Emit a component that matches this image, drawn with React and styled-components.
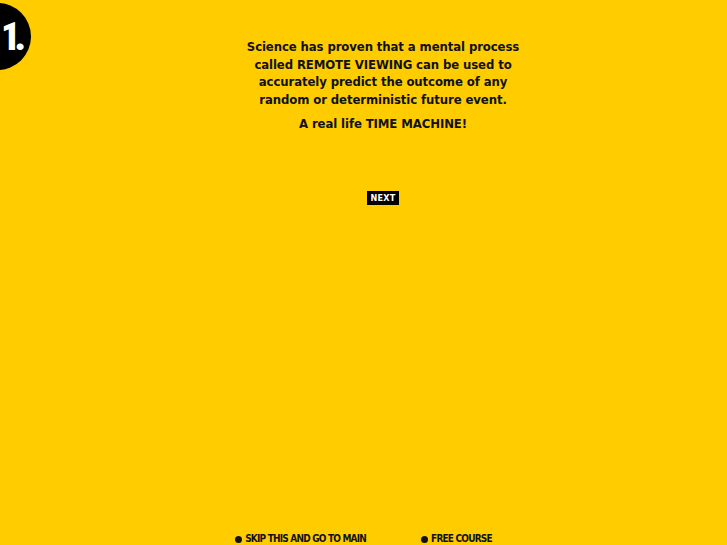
import styled, { createGlobalStyle } from "styled-components";

const GlobalStyle = createGlobalStyle`
    html, body {
        margin:0;
        padding:0;
        background:#ffcc00;
    }
    body {
        font-family:"DejaVu Sans Condensed","DejaVu Sans",sans-serif;
        font-stretch:condensed;
    }
`;

const Page = styled.div`
        position:relative;
        width:100%;
        height:100vh;
        overflow:hidden;
        display:flex;
        flex-direction:column;
        align-items:center;
        background:#ffcc00;
        color:#111;
`;

const StepBadge = styled.div`
        position:absolute;
        top:3px;
        left:-36px;
        width:67px;
        height:67px;
        border-radius:50%;
        background:#000;
        display:flex;
        align-items:center;
        padding-left:37px;
        box-sizing:border-box;
        color:#fff;
        font-family:Roboto,"Liberation Sans",sans-serif;
        font-weight:900;
        font-size:38px;
        letter-spacing:-6px;
`;

const Content = styled.div`
        display:flex;
        flex-direction:column;
        align-items:center;
        margin-left:39px;
`;

const Intro = styled.div`
        margin-top:38px;
        text-align:center;
        white-space:nowrap;
        font-weight:bold;
        font-size:13px;
        line-height:17.5px;
        letter-spacing:-0.1px;
`;

const Tagline = styled.p`
        margin:7px 0 0;
        text-align:center;
        font-weight:bold;
        font-size:13px;
        line-height:17px;
        letter-spacing:-0.1px;
`;

const NextButton = styled.button`
        margin-top:59px;
        background:#000;
        color:#fff;
        border:none;
        padding:0 4px;
        height:14px;
        font-family:inherit;
        font-weight:bold;
        font-size:9px;
        line-height:14px;
        letter-spacing:0.2px;
        cursor:pointer;
`;

const Footer = styled.div`
        margin-top:auto;
        display:flex;
        gap:55px;
        margin-bottom:-1px;
`;

const FooterLink = styled.a`
        display:flex;
        align-items:center;
        gap:3px;
        color:#111;
        text-decoration:none;
        font-weight:bold;
        font-size:10px;
        line-height:14px;
        letter-spacing:-0.8px;
        &:before {
            content:"";
            width:7px;
            height:7px;
            border-radius:50%;
            background:#111;
        }
`;

export default function App() {
    return (
        <Page>
            <GlobalStyle />
            <StepBadge>1.</StepBadge>
            <Content>
                <Intro>
                    Science has proven that a mental process<br />
                    called REMOTE VIEWING can be used to<br />
                    accurately predict the outcome of any<br />
                    random or deterministic future event.
                </Intro>
                <Tagline>A real life TIME MACHINE!</Tagline>
                <NextButton>NEXT</NextButton>
            </Content>
            <Footer>
                <FooterLink href="#">SKIP THIS AND GO TO MAIN</FooterLink>
                <FooterLink href="#">FREE COURSE</FooterLink>
            </Footer>
        </Page>
    );
}
